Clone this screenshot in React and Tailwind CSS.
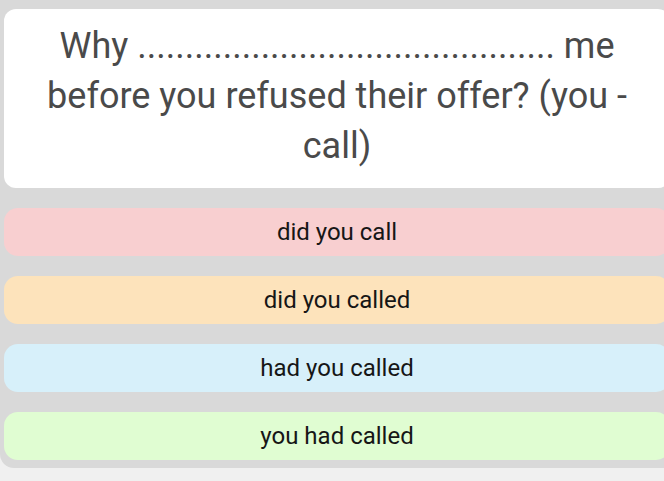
const OPTIONS = [
  { label: 'did you call', bg: 'bg-[#f8cfd0]' },
  { label: 'did you called', bg: 'bg-[#fde3bb]' },
  { label: 'had you called', bg: 'bg-[#d7f0fa]' },
  { label: 'you had called', bg: 'bg-[#e0fdd2]' },
];

export default function App() {
  return (
    <div className="h-[481px] w-full overflow-hidden bg-[#f0f0f0] font-['Roboto',sans-serif]">
      <div className="w-[670px] rounded-bl-[14px] bg-[#d9d9d9] pb-[8px] pl-[4px] pt-[9px]">
        <div className="h-[179px] rounded-[12px] bg-white px-[36px] pt-[12px]">
          <p className="text-center text-[36px] leading-[50px] text-[#4a4a4a]">
            Why ............................................ me before you refused their offer? (you - call)
          </p>
        </div>
        <div className="mt-[20px] flex flex-col gap-[20px]">
          {OPTIONS.map((o) => (
            <div
              key={o.label}
              className={`flex h-[48px] items-center justify-center rounded-[14px] ${o.bg} text-[24px] text-[#161616]`}
            >
              {o.label}
            </div>
          ))}
        </div>
      </div>
    </div>
  );
}
